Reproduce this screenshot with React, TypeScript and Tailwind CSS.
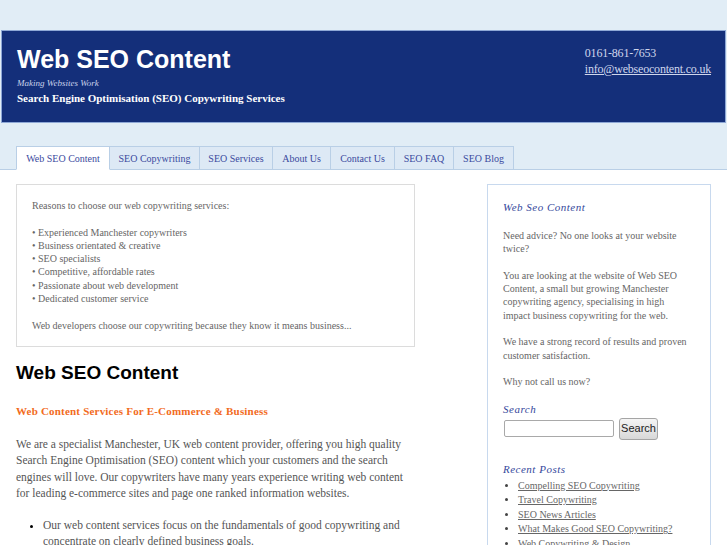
const tabs = [
  { label: 'Web SEO Content', w: 'w-[94px]', active: true },
  { label: 'SEO Copywriting', w: 'w-[90px]' },
  { label: 'SEO Services', w: 'w-[73px]' },
  { label: 'About Us', w: 'w-[58px]' },
  { label: 'Contact Us', w: 'w-[64px]' },
  { label: 'SEO FAQ', w: 'w-[59px]' },
  { label: 'SEO Blog', w: 'w-[60px]' },
];

const reasons = [
  'Experienced Manchester copywriters',
  'Business orientated & creative',
  'SEO specialists',
  'Competitive, affordable rates',
  'Passionate about web development',
  'Dedicated customer service',
];

const posts = [
  'Compelling SEO Copywriting',
  'Travel Copywriting',
  'SEO News Articles',
  'What Makes Good SEO Copywriting?',
  'Web Copywriting & Design',
];

const serif = "font-['Liberation_Serif',serif]";

const App = () => {
  return (
    <div className={`min-h-[545px] bg-white overflow-hidden ${serif}`}>
      {/* top band with header and tabs */}
      <div className="bg-[#e1edf6] pt-[30px] border-b border-[#b9cfe6]">
        <div className="mx-px h-[93px] bg-[#142f7a] border border-[#8ea8d6] flex justify-between pl-[15px] pr-[14px]">
          <div className="pt-[16px]">
            <h1 className="font-['Liberation_Sans',sans-serif] font-bold text-[25px] leading-[25px] text-white">
              Web SEO Content
            </h1>
            <p className="italic text-[9px] leading-[12px] mt-[5px] text-[#c9d2ea]">Making Websites Work</p>
            <p className="font-bold text-[11px] leading-[14px] mt-[2px] text-white">
              Search Engine Optimisation (SEO) Copywriting Services
            </p>
          </div>
          <div className="pt-[14px] pl-1 text-[12px] leading-[16px] text-[#cfd6ec] tracking-[-0.2px]">
            <p>0161-861-7653</p>
            <a href="#" className="underline">info@webseocontent.co.uk</a>
          </div>
        </div>
        <nav className="flex pl-4 pt-[23px]">
          {tabs.map((t, i) => (
            <a
              key={t.label}
              href="#"
              className={`${t.w} h-[24px] -mb-px flex items-center justify-center text-[10px] text-[#3b4a9e] border-t border-r border-b border-[#b9cfe6] ${
                i === 0 ? 'border-l' : ''
              } ${t.active ? 'bg-white border-b-white' : 'bg-[#dde9f5]'}`}
            >
              {t.label}
            </a>
          ))}
        </nav>
      </div>

      <div className="flex px-4 pt-[14px]">
        {/* main column */}
        <div className="w-[399px] shrink-0">
          <div className="border border-[#dcdcdc] px-[15px] pt-[14px] pb-[14px] text-[10px] leading-[13.3px] text-[#666]">
            <p>Reasons to choose our web copywriting services:</p>
            <ul className="my-[13.3px]">
              {reasons.map((r) => (
                <li key={r}>• {r}</li>
              ))}
            </ul>
            <p>Web developers choose our copywriting because they know it means business...</p>
          </div>

          <h2 className="font-['Liberation_Sans',sans-serif] font-bold text-[19px] leading-[24px] text-black mt-[14px]">
            Web SEO Content
          </h2>
          <h3 className="font-bold text-[11px] leading-[14px] text-[#f26b1d] mt-[19px] tracking-[0.2px]">
            Web Content Services For E-Commerce &amp; Business
          </h3>
          <p className="text-[11.5px] leading-[16.3px] text-[#555] mt-[18px]">
            We are a specialist Manchester, UK web content provider, offering you high quality Search Engine
            Optimisation (SEO) content which your customers and the search engines will love. Our copywriters have
            many years experience writing web content for leading e-commerce sites and page one ranked information
            websites.
          </p>
          <ul className="list-disc pl-[27px] mt-[16px] text-[11.5px] leading-[16.3px] text-[#555] marker:text-black">
            <li>
              Our web content services focus on the fundamentals of good copywriting and concentrate on clearly
              defined business goals.
            </li>
          </ul>
        </div>

        {/* sidebar */}
        <aside className="ml-[72px] w-[224px] shrink-0 border border-[#c8d9ee] px-[15px] pt-[15px] pb-6 min-h-[400px]">
          <h4 className="italic text-[11px] leading-[14px] tracking-[0.5px] text-[#34489c]">Web Seo Content</h4>
          <div className="mt-[15px] text-[10px] leading-[13.3px] text-[#666] space-y-[13.3px] pr-2">
            <p>Need advice? No one looks at your website twice?</p>
            <p>
              You are looking at the website of Web SEO Content, a small but growing Manchester copywriting agency,
              specialising in high impact business copywriting for the web.
            </p>
            <p>We have a strong record of results and proven customer satisfaction.</p>
            <p>Why not call us now?</p>
          </div>

          <h4 className="italic text-[11px] leading-[14px] tracking-[0.5px] text-[#34489c] mt-[13px]">Search</h4>
          <div className="flex items-center gap-[5px] mt-[2px] pl-px">
            <input
              type="text"
              className="w-[110px] h-[17px] border border-[#a9a9a9] rounded-[2px] bg-white"
            />
            <button className="h-[22px] w-[39px] rounded-[3px] border border-[#a5a5a5] bg-gradient-to-b from-[#f5f5f5] to-[#d8d8d8] font-['Liberation_Sans',sans-serif] text-[11px] text-[#222]">
              Search
            </button>
          </div>

          <h4 className="italic text-[11px] leading-[14px] tracking-[0.5px] text-[#34489c] mt-[22px]">Recent Posts</h4>
          <ul className="list-disc pl-[15px] mt-[3px] text-[10px] leading-[14.6px] text-[#666] marker:text-[#444]">
            {posts.map((p) => (
              <li key={p}>
                <a href="#" className="underline">{p}</a>
              </li>
            ))}
          </ul>
        </aside>
      </div>
    </div>
  );
};

export default App;
